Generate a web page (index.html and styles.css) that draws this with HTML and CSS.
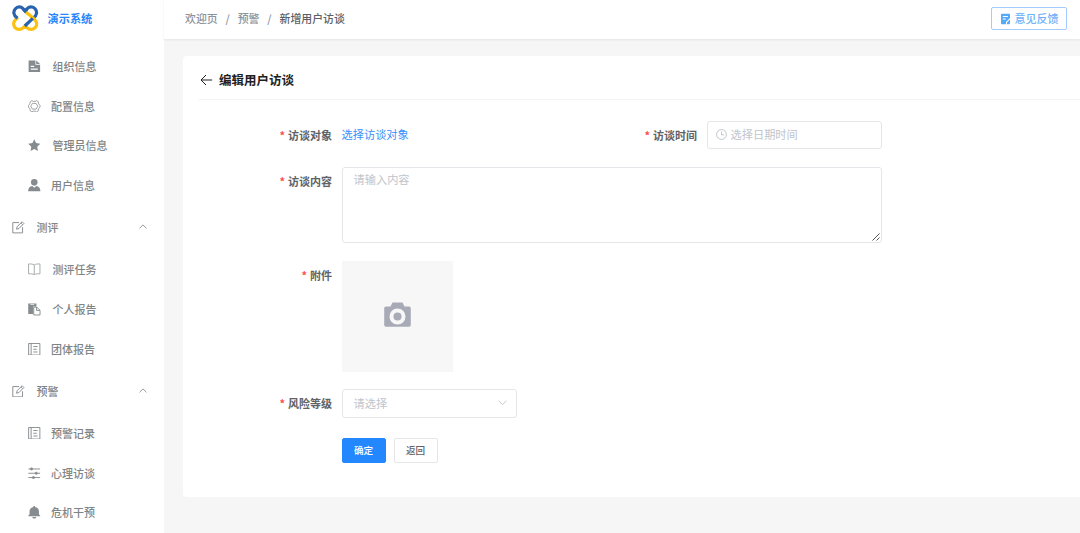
FILE: index.html
```html
<!DOCTYPE html>
<html lang="zh-CN">
<head>
    <meta charset="UTF-8">
    <title>演示系统</title>
    <link rel="stylesheet" href="styles.css">
</head>
<body>
    <div class="layout">
        <!-- 侧边栏 -->
        <aside class="sidebar">
            <div class="logo">
                <svg width="27" height="27" viewBox="0 0 27 27" fill="none" stroke-width="3.2">
                    <path d="M5 12.800 C1.500 10.500 1 6.500 3.200 4 C5.500 1.200 9 1.500 11 3.600 L13.100 6 L15.200 3.600 C17.300 1.500 21 1.200 23.300 4 C25.300 6.500 25 10.500 21.500 12.800" stroke="#2a63ad"/>
                    <path d="M6 12.600 L4 14.300 C1 17 1 20.500 3.300 22.800 C5.500 25 9 24.700 11 22.800 L13.100 20.800 L15.200 22.800 C17.300 24.700 20.500 25 23 22.800 C25.300 20.500 25.300 17 22.300 14.300 L13.500 6.500" stroke="#fcc111"/>
                    <path d="M3.800 11.800 L5.500 13.200 M12.800 21 L20.800 13.300 M11.500 4.200 L13.100 6 L15 4" stroke="#2a63ad"/>
                </svg>
                <span>演示系统</span>
            </div>
            <ul class="menu">
                <li class="item wide">
                    <svg class="icon" viewBox="0 0 16 16" fill="currentColor"><path fill-rule="evenodd" d="M.8.500H9.500v5.500h6v9.500H.8zM10.500.5l5 4.500h-5zM3.500 7.500h4.500v1.300H3.500zM3.500 11h9v1.400h-9z"/></svg>
                    <span>组织信息</span>
                </li>
                <li class="item">
                    <svg class="icon" viewBox="0 0 16 16" fill="none" stroke="currentColor"><path d="M5 .8l1.600.9h2.800L11 .8l2.200 1.400.4 2.600L15.400 7v2l-1.800 2.200-.4 2.600-2.200 1.400-1.600-.9H6.600l-1.600.9-2.200-1.400-.4-2.600L.6 9V7l1.800-2.200.4-2.600z"/><path d="M5.700 4.300h4.600L12.500 8l-2.200 3.700H5.700L3.500 8z"/></svg>
                    <span>配置信息</span>
                </li>
                <li class="item wide">
                    <svg class="icon" viewBox="0 0 16 16" fill="currentColor"><path d="M8 .3l2.300 4.900 5.400.8-3.900 3.800.9 5.500L8 12.700l-4.700 2.600.9-5.500L.3 6l5.400-.8z"/></svg>
                    <span>管理员信息</span>
                </li>
                <li class="item">
                    <svg class="icon" viewBox="0 0 16 16" fill="currentColor"><circle cx="8" cy="4.300" r="4.200"/><path d="M5.300 9L8 11.200 10.700 9c3 .5 5 2.500 5.200 6.700H.1C.3 11.500 2.300 9.500 5.300 9z"/></svg>
                    <span>用户信息</span>
                </li>
            </ul>
            <div class="group">
                <svg class="icon" viewBox="0 0 16 16" fill="none" stroke="currentColor" stroke-width="1.200"><path d="M9 2H1v13.200h12.500V8M5.800 10.500l.8-3.300L13 .9l2.200 2.200L9 9.600z"/><path d="M11.300 2.500l2.200 2.200"/></svg>
                <span>测评</span>
                <svg class="arrow" viewBox="0 0 8 5" fill="none" stroke="currentColor"><path d="M.5 4.300L4 .9l3.500 3.400"/></svg>
            </div>
            <ul class="menu">
                <li class="item wide">
                    <svg class="icon light" viewBox="0 0 16 16" fill="none" stroke="currentColor" stroke-width="1.200"><path d="M8 2.500C6 1.200 4 1.200.7 1.200v12.600c3.300 0 5.300 0 7.300 1 2-1 4-1 7.300-1V1.200c-3.300 0-5.300 0-7.300 1.300zM8 2.500v12"/></svg>
                    <span>测评任务</span>
                </li>
                <li class="item wide">
                    <svg class="icon" viewBox="0 0 16 16"><path fill="currentColor" d="M.3.500h10.500v4H6.500V14H.3z"/><path fill="none" stroke="#fff" d="M3 1.800h5"/><path fill="none" stroke="currentColor" stroke-width="1.200" d="M7.300 5.300h3.900l4.200 4V15.300H7.300zM11 5.300v4.200h4.200"/></svg>
                    <span>个人报告</span>
                </li>
                <li class="item">
                    <svg class="icon" viewBox="0 0 16 16" fill="none" stroke="currentColor" stroke-width="1.200"><path d="M.8.600h14.400v14.800H.8zM4 .6v14.800M6.800 4.500h5.400M6.800 8h4.400M6.800 11.500h5.400"/></svg>
                    <span>团体报告</span>
                </li>
            </ul>
            <div class="group">
                <svg class="icon" viewBox="0 0 16 16" fill="none" stroke="currentColor" stroke-width="1.200"><path d="M9 2H1v13.200h12.500V8M5.800 10.500l.8-3.300L13 .9l2.200 2.200L9 9.600z"/><path d="M11.300 2.500l2.200 2.200"/></svg>
                <span>预警</span>
                <svg class="arrow" viewBox="0 0 8 5" fill="none" stroke="currentColor"><path d="M.5 4.300L4 .9l3.500 3.400"/></svg>
            </div>
            <ul class="menu">
                <li class="item">
                    <svg class="icon" viewBox="0 0 16 16" fill="none" stroke="currentColor" stroke-width="1.200"><path d="M.8.600h14.400v14.800H.8zM4 .6v14.800M6.800 4.500h5.400M6.800 8h4.400M6.800 11.500h5.400"/></svg>
                    <span>预警记录</span>
                </li>
                <li class="item">
                    <svg class="icon" viewBox="0 0 16 16" fill="currentColor" stroke="currentColor"><path stroke-width="1.200" d="M.5 2.500h15M.5 8h15M.5 13.500h15"/><circle cx="4.500" cy="2.500" r="1.400"/><circle cx="10.500" cy="8" r="1.400"/><circle cx="7" cy="13.500" r="1.400"/></svg>
                    <span>心理访谈</span>
                </li>
                <li class="item">
                    <svg class="icon" viewBox="0 0 16 16" fill="currentColor"><path d="M7 0h2v1.200c3.300.6 5 3 5 5.800v3.500l2 2.700H0l2-2.700V7c0-2.800 1.700-5.200 5-5.800zM5.500 14h5c-.3 2.600-4.700 2.600-5 0z"/></svg>
                    <span>危机干预</span>
                </li>
            </ul>
        </aside>

        <div class="main">
            <!-- 顶部导航 -->
            <header class="topbar">
                <div class="breadcrumb">
                    <span>欢迎页</span><i>/</i><span>预警</span><i>/</i><span class="current">新增用户访谈</span>
                </div>
                <button class="feedback">
                    <svg width="11" height="12" viewBox="0 0 11 12"><path fill="#57a9fd" d="M1.800.8h7.400a.8.8 0 0 1 .8.800V5L6 9v2.200H1.800a.8.800 0 0 1-.8-.8V1.600a.8.800 0 0 1 .8-.8zM7 9.500l3-3v3.900l-.8.800H7z"/><path stroke="#fff" d="M2.800 3.500h5.200M2.800 6h3"/></svg>
                    <span>意见反馈</span>
                </button>
            </header>

            <!-- 表单 -->
            <section class="card">
                <div class="card-header">
                    <svg width="13" height="12" viewBox="0 0 13 12" fill="none" stroke="#222"><path d="M6 1L1 6l5 5M1 6h11.200"/></svg>
                    <h1>编辑用户访谈</h1>
                </div>
                <form class="form">
                    <div class="row">
                        <label class="label">访谈对象</label>
                        <a class="link">选择访谈对象</a>
                        <label class="label second">访谈时间</label>
                        <div class="input date">
                            <svg width="11" height="11" viewBox="0 0 11 11" fill="none" stroke="currentColor"><circle cx="5.500" cy="5.500" r="4.900"/><path d="M5.500 2.500v3.300H8"/></svg>
                            <span>选择日期时间</span>
                        </div>
                    </div>
                    <div class="row">
                        <label class="label">访谈内容</label>
                        <div class="input textarea">
                            <span>请输入内容</span>
                            <svg class="resize" width="8" height="8" viewBox="0 0 8 8" stroke="#555"><path d="M.5 7.500l7-7M4.500 7.500l3-3"/></svg>
                        </div>
                    </div>
                    <div class="row">
                        <label class="label">附件</label>
                        <div class="upload">
                            <svg width="27" height="25" viewBox="0 0 27 25"><path fill="#a8abb7" fill-rule="evenodd" d="M8.500.5h10l2 4H25a1.800 1.800 0 0 1 1.800 1.800V23a1.800 1.800 0 0 1-1.800 1.800H2A1.800 1.800 0 0 1 .2 23V6.300A1.800 1.800 0 0 1 2 4.500h4.500zM13.500 6.500a8 8 0 1 0 0 16 8 8 0 1 0 0-16z"/><circle cx="13.500" cy="14.500" r="4" fill="#a8abb7"/></svg>
                        </div>
                    </div>
                    <div class="row">
                        <label class="label">风险等级</label>
                        <div class="input select">
                            <span>请选择</span>
                            <svg width="9" height="6" viewBox="0 0 9 6" fill="none" stroke="currentColor"><path d="M.5 .7l4 4 4-4"/></svg>
                        </div>
                    </div>
                    <div class="actions">
                        <button type="button" class="btn primary">确定</button>
                        <button type="button" class="btn">返回</button>
                    </div>
                </form>
            </section>
        </div>
    </div>
</body>
</html>
```
FILE: styles.css
```css
* {
    box-sizing: border-box;
}
body {
    margin: 0;
    font-family: "Noto Sans CJK SC", sans-serif;
    font-size: 11px;
    color: #606266;
    background: #f6f6f6;
    overflow: hidden;
}
button {
    font-family: inherit;
    padding: 0;
}
svg {
    flex: none;
}
.layout {
    display: flex;
    height: 533px;
}

/* 侧边栏 */
.sidebar {
    width: 164px;
    flex: none;
    background: #fff;
}
.logo {
    display: flex;
    align-items: center;
    gap: 8.5px;
    height: 46.4px;
    padding: 0 0 10.4px 12px;
    color: #2b85fb;
    font-size: 11.2px;
    font-weight: 700;
}
.menu {
    list-style: none;
    margin: 0;
    padding: 0;
}
.item {
    display: flex;
    align-items: center;
    gap: 10.5px;
    height: 39.7px;
    padding-left: 28px;
    color: #7f8587;
    font-weight: 500;
}
.item.wide {
    gap: 12px;
}
.item span {
    padding-bottom: 0.4px;
}
.icon {
    width: 12.5px;
    height: 12.5px;
    color: #858b8e;
}
.icon.light {
    color: #a3a7a9;
}
.group {
    display: flex;
    align-items: center;
    height: 44.6px;
    padding: 0 17px 0 12px;
    color: #7f8587;
    font-weight: 500;
}
.group span {
    margin-left: 12px;
}
.arrow {
    width: 8px;
    height: 5px;
    margin: 0 0 2px auto;
    color: #999;
}

/* 顶部 */
.main {
    flex: 1;
    min-width: 0;
}
.topbar {
    display: flex;
    align-items: center;
    justify-content: space-between;
    height: 39px;
    padding: 0 13px 2px 21px;
    background: #fff;
    box-shadow: 0 1px 2px rgba(0, 0, 0, 0.08);
}
.breadcrumb {
    display: flex;
    padding-bottom: 2px;
    color: #8b939d;
    font-size: 10.9px;
    font-weight: 500;
}
.breadcrumb i {
    width: 20px;
    text-align: center;
    font-style: normal;
}
.breadcrumb .current {
    color: #5c6066;
}
.feedback {
    display: flex;
    align-items: center;
    justify-content: center;
    gap: 4px;
    width: 76px;
    height: 23px;
    border: 1px solid #a3cbfc;
    border-radius: 2px;
    background: #fff;
    color: #6fb1f8;
    font-size: 11px;
    font-weight: 500;
}
.feedback span {
    padding-bottom: 2px;
}

/* 内容卡片 */
.card {
    height: 441px;
    margin: 17px 0 0 19px;
    padding-left: 16px;
    background: #fff;
    border-radius: 4px 0 0 4px;
}
.card-header {
    display: flex;
    align-items: center;
    gap: 6px;
    height: 44px;
    padding: 4px 0 0 1px;
    border-bottom: 1px solid #f3f3f3;
}
.card-header h1 {
    margin: 0;
    padding-bottom: 1px;
    color: #1f1f1f;
    font-size: 12.5px;
    font-weight: 700;
}
.form {
    display: flex;
    flex-direction: column;
    gap: 17.9px;
    padding-top: 20.5px;
}
.row {
    display: flex;
    align-items: flex-start;
}
.label {
    width: 133px;
    margin-right: 9.6px;
    line-height: 28.4px;
    text-align: right;
    color: #606266;
    font-weight: 700;
}
.label::before {
    content: "*";
    margin-right: 3px;
    color: #ff4d4f;
}
.label.second {
    width: 100px;
    margin-left: auto;
}
.row:first-child {
    width: 682.6px;
}
.link {
    color: #3a8ffb;
    font-size: 11.2px;
    line-height: 26px;
}
.input {
    display: flex;
    align-items: center;
    height: 28.7px;
    width: 175px;
    border: 1px solid #e4e6ea;
    border-radius: 3px;
    color: #c0c4cc;
    font-size: 11.2px;
}
.date {
    gap: 4px;
    padding: 0 8px 1px;
}
.select {
    justify-content: space-between;
    padding: 0 9px 1px 11px;
}
.textarea {
    position: relative;
    align-items: flex-start;
    width: 540px;
    height: 75.6px;
    padding: 3px 11px;
}
.resize {
    position: absolute;
    right: 1px;
    bottom: 1px;
}
.upload {
    display: flex;
    align-items: center;
    justify-content: center;
    width: 111px;
    height: 111px;
    padding-bottom: 3px;
    background: #f7f7f7;
}
.actions {
    display: flex;
    gap: 8px;
    padding: 1.5px 0 0 142.6px;
}
.btn {
    width: 44px;
    height: 25.5px;
    border: 1px solid #e4e6ea;
    border-radius: 2px;
    background: #fff;
    color: #606266;
    font-size: 9.6px;
    font-weight: 500;
}
.btn.primary {
    border-color: #2388ff;
    background: #2388ff;
    color: #fff;
}
```
